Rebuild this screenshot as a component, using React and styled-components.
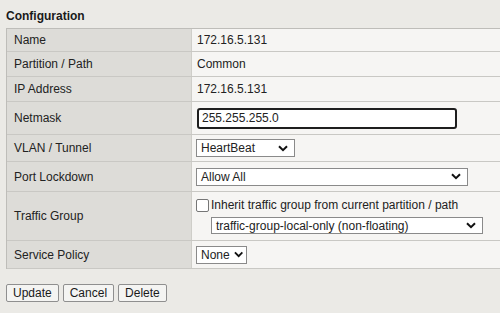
import styled, { createGlobalStyle } from "styled-components";

const GlobalStyle = createGlobalStyle`
  body {
    margin: 0;
    background: #ebeae6;
    font-family: "Liberation Sans", Arial, sans-serif;
    font-size: 12px;
    color: #222;
  }
`;

const Page = styled.div`
  padding: 0 0 0 6px;
  overflow: hidden;
  width: 500px;
  height: 313px;
  box-sizing: border-box;
`;

const Title = styled.div`
  height: 28px;
  box-sizing: border-box;
  padding-top: 9px;
  font-weight: bold;
  font-size: 12px;
  color: #1a1a1a;
`;

const Table = styled.div`
  border-top: 1px solid #bebdb9;
  border-left: 1px solid #bebdb9;
  margin-right: -2px;
`;

const Row = styled.div`
  display: grid;
  grid-template-columns: 184px 1px 1fr;
  height: ${(p) => p.h}px;
  border-bottom: 1px solid #c9c8c4;
`;

const Label = styled.div`
  background: #dddcd8;
  padding-left: 7px;
  display: flex;
  align-items: center;
  color: #222;
`;

const Divider = styled.div`
  background: #cfcec9;
`;

const Value = styled.div`
  background: #f6f5f3;
  padding-left: 5px;
  display: flex;
  flex-direction: column;
  justify-content: center;
  color: #222;
`;

const TextInput = styled.input`
  width: 260px;
  height: 21px;
  box-sizing: border-box;
  border: 2px solid #1e1e1e;
  border-radius: 3px;
  padding: 0 3px;
  font: inherit;
  font-size: 12px;
  color: #222;
  background: #fff;
  outline: none;
`;

const SelectBox = styled.div`
  width: ${(p) => p.w}px;
  height: ${(p) => p.hh || 18}px;
  margin-left: ${(p) => p.ml || -1}px;
  box-sizing: border-box;
  border: 1px solid #8a8a8a;
  background: #fff;
  display: flex;
  align-items: center;
  justify-content: space-between;
  gap: 4px;
  padding: 0 ${(p) => p.pr || 6}px 0 4px;
  color: #222;
`;

const Chevron = () => (
  <svg width="10" height="7" viewBox="0 0 10 7">
    <path d="M1 1.2 L5 5.2 L9 1.2" fill="none" stroke="#111" strokeWidth="2" />
  </svg>
);

const Select = ({ w, hh, ml, pr, children }) => (
  <SelectBox w={w} hh={hh} ml={ml} pr={pr}>
    <span>{children}</span>
    <Chevron />
  </SelectBox>
);

const CheckLine = styled.label`
  display: flex;
  align-items: center;
  gap: 2px;
  margin-left: -1px;
`;

const Check = styled.span`
  width: 13px;
  height: 13px;
  box-sizing: border-box;
  border: 1px solid #767676;
  border-radius: 2px;
  background: #fff;
`;

const Stack = styled.div`
  display: flex;
  flex-direction: column;
  gap: 5px;
`;

const Buttons = styled.div`
  display: flex;
  gap: 4px;
  margin-top: 15px;
`;

const Button = styled.button`
  height: 18px;
  padding: 0 6px;
  font: inherit;
  font-size: 12px;
  color: #1a1a1a;
  background: #f4f4f2;
  border: 1px solid #8f8f8f;
  border-radius: 2px;
`;

const App = () => {
  return (
    <Page>
      <GlobalStyle />
      <Title>Configuration</Title>
      <Table>
        <Row h={22}>
          <Label>Name</Label>
          <Divider />
          <Value>172.16.5.131</Value>
        </Row>
        <Row h={24}>
          <Label>Partition / Path</Label>
          <Divider />
          <Value>Common</Value>
        </Row>
        <Row h={24}>
          <Label>IP Address</Label>
          <Divider />
          <Value>172.16.5.131</Value>
        </Row>
        <Row h={32}>
          <Label>Netmask</Label>
          <Divider />
          <Value>
            <TextInput defaultValue="255.255.255.0" />
          </Value>
        </Row>
        <Row h={26}>
          <Label>VLAN / Tunnel</Label>
          <Divider />
          <Value>
            <Select w={99}>HeartBeat</Select>
          </Value>
        </Row>
        <Row h={29}>
          <Label>Port Lockdown</Label>
          <Divider />
          <Value>
            <Select w={272}>Allow All</Select>
          </Value>
        </Row>
        <Row h={48}>
          <Label>Traffic Group</Label>
          <Divider />
          <Value>
            <Stack>
              <CheckLine>
                <Check />
                Inherit traffic group from current partition / path
              </CheckLine>
              <Select w={272} hh={17} ml={14}>
                traffic-group-local-only (non-floating)
              </Select>
            </Stack>
          </Value>
        </Row>
        <Row h={27}>
          <Label>Service Policy</Label>
          <Divider />
          <Value>
            <Select w={51} pr={3}>None</Select>
          </Value>
        </Row>
      </Table>
      <Buttons>
        <Button>Update</Button>
        <Button>Cancel</Button>
        <Button>Delete</Button>
      </Buttons>
    </Page>
  );
};

export default App;
